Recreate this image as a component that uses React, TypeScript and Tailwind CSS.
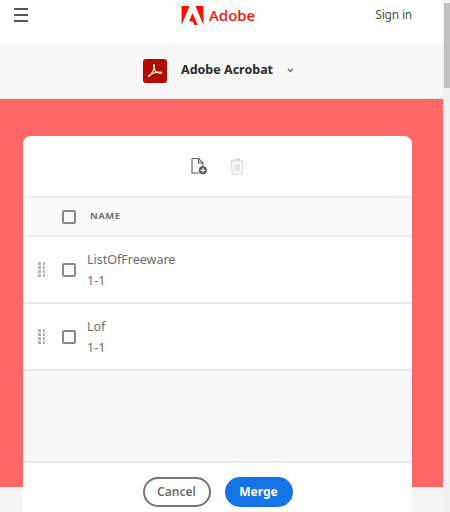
import React from 'react';

const fontStack = { fontFamily: '"Noto Sans", Arial, sans-serif' };

const Checkbox = () => (
  <div className="w-[14px] h-[14px] rounded-[2px] border-2 border-[#8a8a8a] bg-[#fafafa]" />
);

const Grip = () => (
  <div className="grid grid-cols-2 gap-x-[2px] gap-y-[1.5px] w-[7px]">
    {[0, 1, 2, 3, 4, 5, 6, 7].map((i) => (
      <span key={i} className="w-[2.5px] h-[2.5px] bg-[#b4b4b4]" />
    ))}
  </div>
);

const Row = ({ name }: { name: string }) => (
  <div className="h-[67px] flex items-center bg-white border-b-2 border-[#eaeaea]">
    <div className="w-[15px] ml-[15px]">
      <Grip />
    </div>
    <div className="ml-[9px]">
      <Checkbox />
    </div>
    <div className="ml-[11px] flex flex-col gap-[4px] text-[#6e6e6e] text-[12.5px] leading-[17px]">
      <span>{name}</span>
      <span>1-1</span>
    </div>
  </div>
);

const App = () => {
  return (
    <div className="w-[450px] h-[512px] overflow-hidden flex bg-white" style={fontStack}>
      <div className="w-[443px] h-[512px] flex flex-col shrink-0 overflow-hidden">
        <header className="h-[43px] shrink-0 bg-white flex items-center pb-[13px]">
          <div className="ml-[14px] flex flex-col gap-[4.5px] w-[14px]">
            <span className="h-[1.5px] bg-[#555555]" />
            <span className="h-[1.5px] bg-[#555555]" />
            <span className="h-[1.5px] bg-[#555555]" />
          </div>
          <div className="ml-[153px] flex items-center gap-[5px]">
            <svg width="23" height="19" viewBox="0 0 30 26" fill="#fa0f00">
              <path d="M19 0h11v26z" />
              <path d="M11 0H0v26z" />
              <path d="M15 9.6 22 26h-4.6l-2.1-5.2H10.200z" />
            </svg>
            <span className="text-[#fa0f00] text-[15px] font-medium">Adobe</span>
          </div>
          <span className="ml-auto mr-[31px] text-[12px] tracking-[-0.2px] text-[#505050]">Sign in</span>
        </header>

        <div className="h-[56px] shrink-0 bg-[#f7f7f7] border-b border-[#e8e8e8] flex items-center">
          <div className="ml-[143px] w-[24px] h-[24px] rounded-[3px] bg-[#b30b00] flex items-center justify-center">
            <svg width="16" height="15" viewBox="0 0 16 15" fill="none" stroke="#ffffff" strokeWidth="1.100">
              <path d="M1.500 13.500C3 13.300 5.800 9.500 7 5.500 7.500 3.500 7.600 1.600 7 1.500 6.400 1.500 6.400 3.500 7 5.300 8 8.300 10.500 10 13 10.200 14.300 10.300 15 9.700 14.500 9.300 13.800 8.800 10 9.200 6.500 10.300 3.500 11.300 1 13 1.500 13.500Z" />
            </svg>
          </div>
          <span className="ml-[14px] text-[12.5px] font-bold text-[#2c2c2c]">Adobe Acrobat</span>
          <svg className="ml-[14px]" width="7" height="5" viewBox="0 0 7 5" fill="none" stroke="#6e6e6e" strokeWidth="1.300">
            <path d="M1 1l2.500 2.500L6 1" />
          </svg>
        </div>

        <section className="h-[388px] shrink-0 bg-[#ff6666] pt-[37px] px-[23px]">
          <div className="relative z-10 w-[389px] h-[400px] rounded-t-[8px] bg-white flex flex-col">
            <div className="h-[60px] shrink-0 flex items-center justify-center gap-[21px]">
              <svg width="18" height="18" viewBox="0 0 18 18" fill="none">
                <path d="M2 1.500h6.500L13 6v4M8.500 1.500V6H13M2 1.500V16h7" stroke="#5a5a5a" strokeWidth="1.100" />
                <circle cx="12.800" cy="13.300" r="4" fill="#5a5a5a" />
                <path d="M12.800 11v4.600M10.500 13.300h4.600" stroke="#ffffff" strokeWidth="1.200" />
              </svg>
              <svg width="16" height="17" viewBox="0 0 16 17" fill="none" stroke="#d6d6d6" strokeWidth="1.100">
                <path d="M1 3h14M5.500 3V1.200h5V3M2.500 3l.8 13h9.400l.8-13" />
                <path d="M6 5.500v8M8 5.500v8M10 5.500v8" />
              </svg>
            </div>
            <div className="h-[41px] shrink-0 flex items-center bg-[#fafafa] border-y-2 border-[#efefef]">
              <div className="ml-[39px]">
                <Checkbox />
              </div>
              <span className="ml-[14px] text-[9.500px] font-bold tracking-[0.5px] text-[#747474]">NAME</span>
            </div>
            <Row name="ListOfFreeware" />
            <Row name="Lof" />
            <div className="h-[92px] shrink-0 bg-[#f7f7f7] border-b-2 border-[#eaeaea]" />
            <div className="flex-1 flex justify-center gap-[14px] pt-[14px]">
              <button className="w-[68px] h-[30px] rounded-full border-2 border-[#747474] text-[12px] font-semibold text-[#6e6e6e]">
                Cancel
              </button>
              <button className="w-[68px] h-[30px] rounded-full bg-[#1473e6] text-[12px] font-bold text-white">
                Merge
              </button>
            </div>
          </div>
        </section>
        <div className="flex-1 bg-[#f5f5f5]" />
      </div>
      <div className="w-[7px] h-[512px] bg-[#f1f1f1] pt-[3px] pl-[1px]">
        <div className="w-[6px] h-[85px] bg-[#c1c1c1]" />
      </div>
    </div>
  );
};

export default App;
